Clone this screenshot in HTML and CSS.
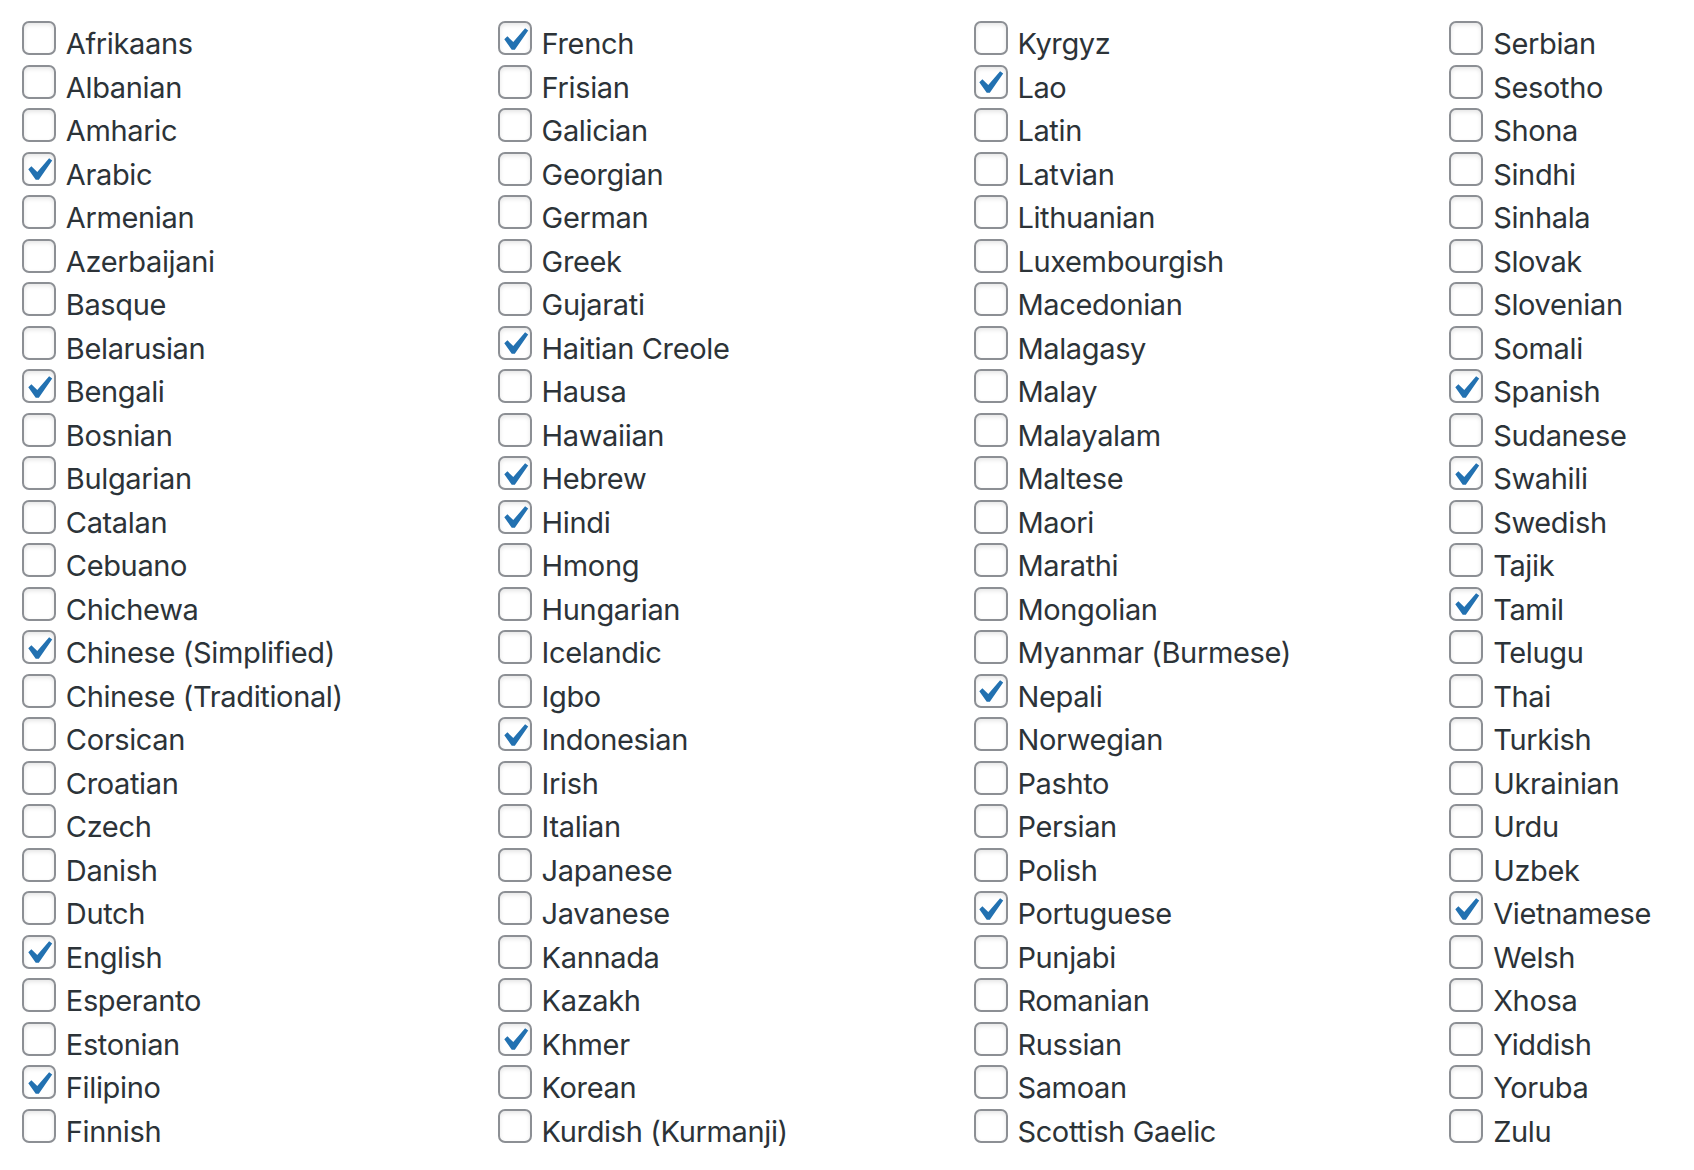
FILE: index.html
```html
<!DOCTYPE html>
<html lang="en">
<head>
    <meta charset="UTF-8">
    <meta name="viewport" content="width=device-width, initial-scale=1.0">
    <title>Languages</title>
    <link rel="stylesheet" href="styles.css">
</head>
<body>
    <div class="lang-grid" id="langGrid"></div>

    <script>
        // 语言列表，按列排列
        const languages = [
            'Afrikaans', 'Albanian', 'Amharic', 'Arabic', 'Armenian', 'Azerbaijani', 'Basque', 'Belarusian',
            'Bengali', 'Bosnian', 'Bulgarian', 'Catalan', 'Cebuano', 'Chichewa', 'Chinese (Simplified)',
            'Chinese (Traditional)', 'Corsican', 'Croatian', 'Czech', 'Danish', 'Dutch', 'English',
            'Esperanto', 'Estonian', 'Filipino', 'Finnish',
            'French', 'Frisian', 'Galician', 'Georgian', 'German', 'Greek', 'Gujarati', 'Haitian Creole',
            'Hausa', 'Hawaiian', 'Hebrew', 'Hindi', 'Hmong', 'Hungarian', 'Icelandic', 'Igbo', 'Indonesian',
            'Irish', 'Italian', 'Japanese', 'Javanese', 'Kannada', 'Kazakh', 'Khmer', 'Korean',
            'Kurdish (Kurmanji)',
            'Kyrgyz', 'Lao', 'Latin', 'Latvian', 'Lithuanian', 'Luxembourgish', 'Macedonian', 'Malagasy',
            'Malay', 'Malayalam', 'Maltese', 'Maori', 'Marathi', 'Mongolian', 'Myanmar (Burmese)', 'Nepali',
            'Norwegian', 'Pashto', 'Persian', 'Polish', 'Portuguese', 'Punjabi', 'Romanian', 'Russian',
            'Samoan', 'Scottish Gaelic',
            'Serbian', 'Sesotho', 'Shona', 'Sindhi', 'Sinhala', 'Slovak', 'Slovenian', 'Somali', 'Spanish',
            'Sudanese', 'Swahili', 'Swedish', 'Tajik', 'Tamil', 'Telugu', 'Thai', 'Turkish', 'Ukrainian',
            'Urdu', 'Uzbek', 'Vietnamese', 'Welsh', 'Xhosa', 'Yiddish', 'Yoruba', 'Zulu'
        ];

        const checked = [
            'Arabic', 'Bengali', 'Chinese (Simplified)', 'English', 'Filipino', 'French', 'Haitian Creole',
            'Hebrew', 'Hindi', 'Indonesian', 'Khmer', 'Lao', 'Nepali', 'Portuguese', 'Spanish', 'Swahili',
            'Tamil', 'Vietnamese'
        ];

        const checkSvg = '<svg class="check" viewBox="0 0 20 20"><path d="M14.83 4.89l1.34.94-5.81 8.38H9.02L5.78 9.67l1.34-1.25 2.57 2.4z"/></svg>';

        const grid = document.getElementById('langGrid');
        languages.forEach(function(name) {
            const item = document.createElement('label');
            item.className = 'lang-item';
            const isOn = checked.includes(name);
            item.innerHTML =
                '<span class="box">' + (isOn ? checkSvg : '') + '</span>' +
                '<span class="lang-name"></span>';
            item.querySelector('.lang-name').textContent = name;
            item.addEventListener('click', function() {
                const box = item.querySelector('.box');
                box.innerHTML = box.innerHTML ? '' : checkSvg;
            });
            grid.appendChild(item);
        });
    </script>
</body>
</html>
```

FILE: styles.css
```css
* {
    margin: 0;
    padding: 0;
    box-sizing: border-box;
}

body {
    background-color: #FFFFFF;
    font-family: 'Inter', 'Noto Sans', sans-serif;
    color: #2C3338;
    overflow: hidden;
}

.lang-grid {
    display: grid;
    grid-template-columns: repeat(3, 475.8px) 1fr;
    grid-template-rows: repeat(26, 43.5px);
    grid-auto-flow: column;
    padding: 16.5px 0 0 22px;
}

.lang-item {
    display: flex;
    align-items: flex-start;
    gap: 9.8px;
    cursor: pointer;
}

.box {
    position: relative;
    flex: none;
    width: 34px;
    height: 34px;
    margin-top: 4.8px;
    border: 2.5px solid #8C8F94;
    border-radius: 7px;
    background-color: #FFFFFF;
    box-shadow: inset 0 2px 4px rgba(0, 0, 0, 0.1);
}

.check {
    position: absolute;
    left: -9.2px;
    top: -6.8px;
    width: 46px;
    height: 46px;
    fill: #2271B1;
}

.lang-name {
    font-size: 29px;
    letter-spacing: -0.35px;
    line-height: 43.5px;
    padding-top: 5.5px;
    white-space: nowrap;
}
```
